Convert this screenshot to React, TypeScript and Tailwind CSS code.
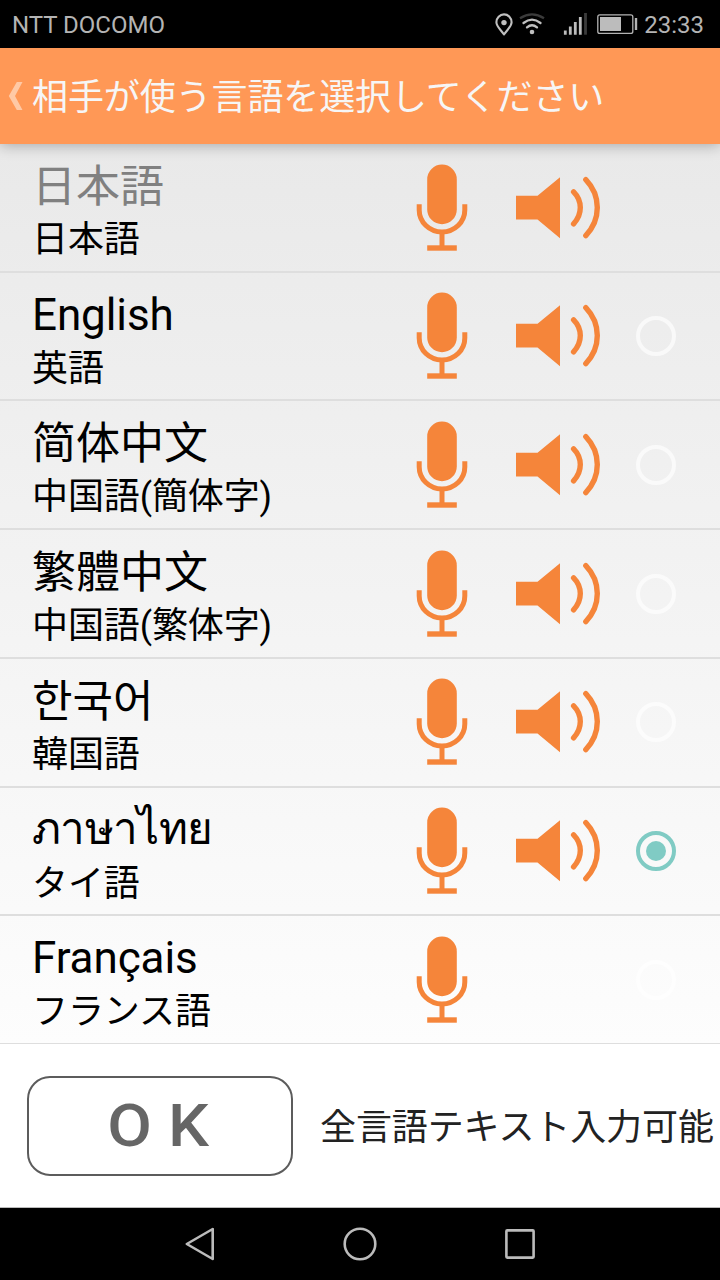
type Language = {
  name: string;
  label: string;
  speaker: boolean;
  radio: 'none' | 'off' | 'on';
  nameClass?: string;
};

const languages: Language[] = [
  { name: '日本語', label: '日本語', speaker: true, radio: 'none', nameClass: 'text-[#808080] -ml-px pt-[2px]' },
  { name: 'English', label: '英語', speaker: true, radio: 'off', nameClass: 'text-black -ml-px pt-px tracking-[-0.1px]' },
  { name: '简体中文', label: '中国語(簡体字)', speaker: true, radio: 'off', nameClass: 'text-black -ml-px pt-[2px] font-[Roboto,"Noto_Sans_CJK_SC",sans-serif]' },
  { name: '繁體中文', label: '中国語(繁体字)', speaker: true, radio: 'off', nameClass: 'text-black -ml-px pt-[2px] font-[Roboto,"Noto_Sans_CJK_TC",sans-serif]' },
  { name: '한국어', label: '韓国語', speaker: true, radio: 'off', nameClass: 'text-black -ml-px pt-[2px] font-[Roboto,"Noto_Sans_CJK_KR",sans-serif]' },
  { name: 'ภาษาไทย', label: 'タイ語', speaker: true, radio: 'on', nameClass: 'text-black -ml-px tracking-[-0.7px]' },
  { name: 'Français', label: 'フランス語', speaker: false, radio: 'off', nameClass: 'text-black -ml-px pt-px tracking-[-0.1px]' },
];

function MicIcon() {
  return (
    <svg width="52" height="88" viewBox="0 0 52 88" fill="none">
      <rect x="11.2" y="0.6" width="29.6" height="59.6" rx="14.8" fill="#f5853a" />
      <path d="M3.2 40.3V46a22.8 22 0 0 0 45.6 0V40.3" stroke="#f5853a" strokeWidth="5" />
      <path d="M26 68V84" stroke="#f5853a" strokeWidth="5" />
      <path d="M11.2 84H40.8" stroke="#f5853a" strokeWidth="5.4" />
    </svg>
  );
}

function SpeakerIcon() {
  return (
    <svg width="86" height="64" viewBox="0 0 86 64" fill="none">
      <path d="M1 19.8H22.5L45 1.2V62.2L22.5 43.6H1Z" fill="#f5853a" />
      <path d="M58.6 15.8Q65.3 22.5 65.3 31.6T58.6 47.8" stroke="#f5853a" strokeWidth="5.4" strokeLinecap="round" />
      <path d="M70.8 3.6Q82.3 15.6 82.3 31.6T70.8 59.6" stroke="#f5853a" strokeWidth="5.4" strokeLinecap="round" />
    </svg>
  );
}

function Radio({ state }: { state: Language['radio'] }) {
  if (state === 'none') return <div className="size-10" />;
  if (state === 'off') return <div className="size-10 rounded-full border-4 border-white/65" />;
  return (
    <div className="flex size-10 items-center justify-center rounded-full border-4 border-[#80cbc4]">
      <div className="size-5 rounded-full bg-[#80cbc4]" />
    </div>
  );
}

function StatusBar() {
  return (
    <div className="flex h-12 shrink-0 items-center bg-black pr-4 pl-3 text-[#b4b4b4]">
      <span className="grow pt-[2px] text-[24px] leading-[30px]">NTT DOCOMO</span>
      <svg width="146" height="28" viewBox="0 0 146 28" fill="none" className="mr-1.5">
        <path d="M12 24.5C9 20 4.4 16.4 4.4 12.2a7.6 7.8 0 0 1 15.2 0C19.6 16.4 15 20 12 24.5Z" stroke="#c0c0c0" strokeWidth="2.1" strokeLinejoin="round" />
        <circle cx="12" cy="12.6" r="2.7" fill="#c0c0c0" />
        <path d="M28 8.3Q40 .6 52 8.3" stroke="#3b3b3b" strokeWidth="2.3" />
        <path d="M31.5 13Q40 6.2 48.5 13M35 17.4Q40 13.2 45 17.4" stroke="#c0c0c0" strokeWidth="2.3" strokeLinecap="round" />
        <circle cx="40" cy="22" r="2.3" fill="#c0c0c0" />
        <path d="M73.3 24.7V20.5M78.3 24.7V16.4M83.3 24.7V12M88.3 24.7V7" stroke="#bcbcbc" strokeWidth="2.8" />
        <path d="M93.5 24.7V3" stroke="#3b3b3b" strokeWidth="2.8" />
        <rect x="105.8" y="4.8" width="35" height="18.6" rx="2" stroke="#b4b4b4" strokeWidth="1.3" />
        <rect x="108" y="7" width="21" height="14" fill="#bcbcbc" />
        <path d="M144 8V20" stroke="#b4b4b4" strokeWidth="2.4" />
      </svg>
      <span className="pt-[2px] text-[24px] leading-[30px]">23:33</span>
    </div>
  );
}

function Header() {
  return (
    <header className="z-10 flex h-24 shrink-0 items-center bg-[#ff9856] pl-2 shadow-[0_1px_14px_rgba(0,0,0,0.3)]">
      <svg width="15" height="30" viewBox="0 0 15 30">
        <path d="M8.8 1H14.5L7 15L14.5 29H8.8L0.8 15Z" fill="#ffc9a5" />
      </svg>
      <h1 className="pt-[4px] pl-[9px] text-[36px] leading-[48px] font-normal tracking-[-0.1px] whitespace-nowrap text-[#f6f6f6]">
        相手が使う言語を選択してください
      </h1>
    </header>
  );
}

function LanguageRow({ language }: { language: Language }) {
  return (
    <li className="flex min-h-0 border-b-2 border-[#dedede] pl-[33px] last:border-b">
      <div className="w-[383px] shrink-0 pt-[15px] whitespace-nowrap">
        <div className={`h-[55px] text-[44px] leading-[53px] ${language.nameClass}`}>{language.name}</div>
        <div className="-ml-px h-[53px] text-[36px] leading-[53px] tracking-[-0.1px] text-black">{language.label}</div>
      </div>
      <div className="flex h-[127px] shrink-0 items-center">
        <MicIcon />
        <div className="ml-[47px] w-[121px]">{language.speaker && <SpeakerIcon />}</div>
        <Radio state={language.radio} />
      </div>
    </li>
  );
}

export default function App() {
  return (
    <div className="flex h-[1280px] w-[720px] flex-col overflow-hidden bg-white font-[Roboto,'Noto_Sans_CJK_JP','Noto_Sans',sans-serif]">
      <StatusBar />
      <Header />
      <ul className="grid h-[900px] shrink-0 grid-rows-[repeat(6,128.71px)_1fr] bg-linear-to-b from-[#e9e9e9] to-[#fdfdfd]">
        {languages.map((language) => (
          <LanguageRow key={language.label} language={language} />
        ))}
      </ul>
      <div className="flex h-[164px] shrink-0 items-center border-b border-[#bbb] pl-[27px]">
        <button className="flex h-[100px] w-[266px] items-center justify-center rounded-[23px] border-2 border-[#5c5c5c] pr-[3px] text-[60px] leading-none font-medium text-[#666]">
          <span className="scale-x-108">O K</span>
        </button>
        <span className="pt-[4px] pl-[27px] text-[36px] leading-[48px] tracking-[-0.1px] whitespace-nowrap text-[#222]">全言語テキスト入力可能</span>
      </div>
      <nav className="flex h-[72px] items-center justify-center gap-[120px] bg-black">
        <svg width="40" height="40" viewBox="0 0 40 40" fill="none" stroke="#bbb" strokeWidth="2.6">
          <path d="M6.8 20L32.7 5V35Z" strokeLinejoin="round" />
        </svg>
        <svg width="40" height="40" viewBox="0 0 40 40" fill="none" stroke="#bbb" strokeWidth="2.6">
          <circle cx="20" cy="20" r="15.3" />
        </svg>
        <svg width="40" height="40" viewBox="0 0 40 40" fill="none" stroke="#bbb" strokeWidth="2.6">
          <rect x="6.4" y="6.4" width="27.2" height="27.2" rx="0.8" />
        </svg>
      </nav>
    </div>
  );
}
